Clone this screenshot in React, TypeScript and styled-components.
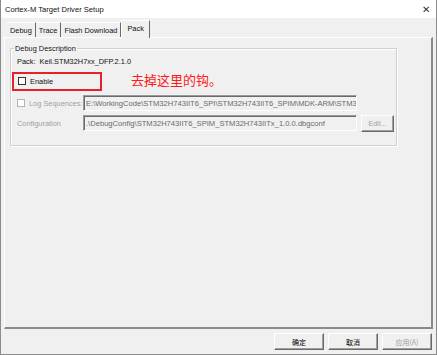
import styled, { createGlobalStyle } from "styled-components";

const Global = createGlobalStyle`
  html, body {
    margin: 0;
    padding: 0;
    background: #ffffff;
  }
  body {
    font-family: "Liberation Sans", Arial, "Noto Sans CJK SC", sans-serif;
    font-size: 7.4px;
    color: #111;
  }
`;

const Window = styled.div`
  width: 437px;
  height: 355px;
  box-sizing: border-box;
  border: 1px solid #8c8c8c;
  border-top: none;
  display: flex;
  flex-direction: column;
  background: #f0f0f0;
`;

const TitleBar = styled.div`
  height: 18px;
  background: #ffffff;
  display: flex;
  align-items: center;
  justify-content: space-between;
  padding: 0 6px 0 4px;
  font-size: 7.6px;
  span:last-child {
    font-size: 10px;
    color: #333;
  }
`;

const Body = styled.div`
  flex: 1;
  display: flex;
  flex-direction: column;
  padding: 1px 3px 0 3px;
`;

const TabRow = styled.div`
  display: flex;
  align-items: flex-end;
  height: 18px;
  padding-left: 3px;
`;

const Tab = styled.div<{ $active?: boolean }>`
  height: ${(p) => (p.$active ? 18 : 15)}px;
  box-sizing: border-box;
  padding: 0 ${(p) => (p.$active ? 5 : 3)}px;
  display: flex;
  align-items: ${(p) => (p.$active ? "flex-start" : "center")};
  padding-top: ${(p) => (p.$active ? 3 : 0)}px;
  background: #f0f0f0;
  border-top: 1px solid #ffffff;
  border-left: ${(p) => (p.$active ? "1px solid #ffffff" : "none")};
  border-right: 1px solid #6a6a6a;
  margin-bottom: ${(p) => (p.$active ? -1 : 0)}px;
  position: relative;
  z-index: ${(p) => (p.$active ? 1 : 0)};
`;

const Panel = styled.div`
  flex: 1;
  box-sizing: border-box;
  border-top: 1px solid #ffffff;
  border-left: 1px solid #ffffff;
  border-right: 2px solid #8a8a8a;
  border-bottom: 2px solid #8a8a8a;
  padding: 6px 0 0 5px;
`;

const Group = styled.fieldset`
  width: 387px;
  height: 102px;
  box-sizing: border-box;
  margin: 0;
  padding: 2px 0 0 1px;
  border: 1px solid #d0d0d0;
  box-shadow: inset 1px 1px 0 #ffffff, 1px 1px 0 #ffffff;
  display: flex;
  flex-direction: column;
  legend {
    padding: 0 1px;
    margin-left: 2px;
  }
`;

const PackLine = styled.div`
  padding-left: 5px;
  height: 13px;
  display: flex;
  align-items: center;
`;

const EnableRow = styled.div`
  display: flex;
  align-items: center;
  margin-top: 3px;
  height: 20px;
`;

const RedFrame = styled.div`
  width: 90px;
  height: 19px;
  box-sizing: border-box;
  border: 2px solid #e5222a;
  display: flex;
  align-items: center;
  padding-left: 4px;
  gap: 4px;
`;

const Note = styled.span`
  margin-left: 29px;
  margin-top: -3px;
  color: #ff1a1a;
  font-family: "Noto Sans CJK SC", sans-serif;
  font-size: 13px;
`;

const Box = styled.span<{ $disabled?: boolean }>`
  width: 8px;
  height: 8px;
  box-sizing: border-box;
  border: 1px solid ${(p) => (p.$disabled ? "#b4b4b4" : "#333")};
  background: #fff;
  display: inline-block;
`;

const FieldRow = styled.div`
  display: flex;
  align-items: center;
  height: 16px;
  margin-top: 4px;
  padding-left: 5px;
`;

const Label = styled.div`
  width: 66px;
  display: flex;
  align-items: center;
  gap: 4px;
  color: #a0a0a0;
`;

const Input = styled.div`
  width: 274px;
  height: 16px;
  box-sizing: border-box;
  border-top: 1px solid #9a9a9a;
  border-left: 1px solid #9a9a9a;
  border-right: 1px solid #ffffff;
  border-bottom: 1px solid #ffffff;
  box-shadow: inset 1px 1px 0 #6a6a6a;
  display: flex;
  align-items: center;
  padding-left: 2px;
  color: #6a6a6a;
  font-size: 7.6px;
  white-space: nowrap;
  overflow: hidden;
`;

const Button = styled.div<{ $disabled?: boolean; $w?: number }>`
  width: ${(p) => p.$w ?? 50}px;
  height: 17px;
  box-sizing: border-box;
  border-top: 1px solid #ffffff;
  border-left: 1px solid #ffffff;
  border-right: 1px solid #6a6a6a;
  border-bottom: 1px solid #6a6a6a;
  box-shadow: inset -1px -1px 0 #a0a0a0;
  display: flex;
  align-items: center;
  justify-content: center;
  color: ${(p) => (p.$disabled ? "#a0a0a0" : "#000")};
  font-family: "Noto Sans CJK SC", sans-serif;
  font-size: 7px;
`;

const EditButton = styled(Button)`
  margin-left: 4px;
  font-family: "Liberation Sans", Arial, sans-serif;
`;

const Footer = styled.div`
  height: 25px;
  display: flex;
  align-items: center;
  justify-content: flex-end;
  gap: 4px;
  padding-right: 1px;
`;

export default function App() {
  return (
    <>
      <Global />
      <Window>
        <TitleBar>
          <span>Cortex-M Target Driver Setup</span>
          <span>✕</span>
        </TitleBar>
        <Body>
          <TabRow>
            <Tab>Debug</Tab>
            <Tab>Trace</Tab>
            <Tab>Flash Download</Tab>
            <Tab $active>Pack</Tab>
          </TabRow>
          <Panel>
            <Group>
              <legend>Debug Description</legend>
              <PackLine>Pack:&nbsp; Keil.STM32H7xx_DFP.2.1.0</PackLine>
              <EnableRow>
                <RedFrame>
                  <Box />
                  <span>Enable</span>
                </RedFrame>
                <Note>去掉这里的钩。</Note>
              </EnableRow>
              <FieldRow>
                <Label>
                  <Box $disabled />
                  <span>Log Sequences:</span>
                </Label>
                <Input>E:\WorkingCode\STM32H743IIT6_SPI\STM32H743IIT6_SPIM\MDK-ARM\STM32H74</Input>
              </FieldRow>
              <FieldRow>
                <Label>Configuration</Label>
                <Input>.\DebugConfig\STM32H743IIT6_SPIM_STM32H743IITx_1.0.0.dbgconf</Input>
                <EditButton $disabled $w={33}>Edit...</EditButton>
              </FieldRow>
            </Group>
          </Panel>
          <Footer>
            <Button>确定</Button>
            <Button>取消</Button>
            <Button $disabled>应用(A)</Button>
          </Footer>
        </Body>
      </Window>
    </>
  );
}
